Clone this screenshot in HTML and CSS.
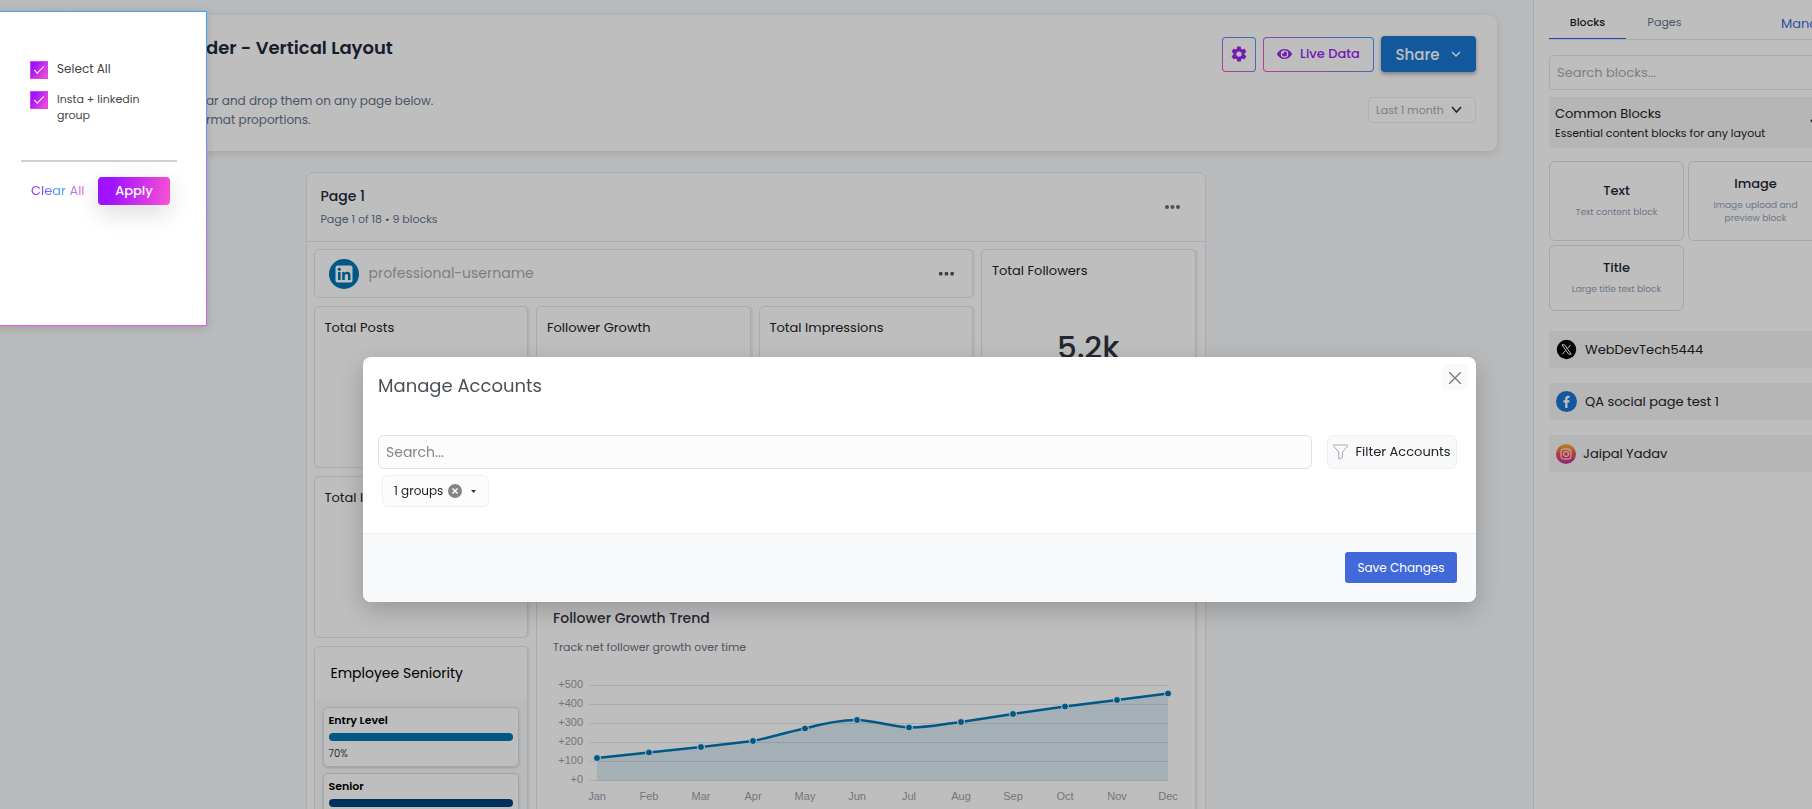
FILE: index.html
```html
<!DOCTYPE html>
<html lang="en">
<head>
<meta charset="utf-8">
<title>Report Builder</title>
<link rel="stylesheet" href="styles.css">
</head>
<body>
<div class="app">
  <main class="main">
    <header class="hero">
      <div class="intro">
        <h1 class="intro-title">der - Vertical Layout</h1>
        <p class="intro-text">ar and drop them on any page below.<br>rmat proportions.</p>
      </div>
      <div class="hero-side">
        <div class="actions">
          <button class="btn-outline btn-gear" aria-label="Settings">
            <svg width="18" height="18" viewBox="0 0 24 24" fill="#9a26f0"><path d="M19.4 13a7.500 7.500 0 0 0 0-2l2.100-1.600a.5.5 0 0 0 .1-.7l-2-3.400a.5.5 0 0 0-.6-.2l-2.500 1a7.300 7.300 0 0 0-1.700-1l-.4-2.600a.5.5 0 0 0-.5-.5h-4a.5.5 0 0 0-.5.500L9.100 5.100a7.300 7.300 0 0 0-1.700 1l-2.500-1a.5.5 0 0 0-.6.200l-2 3.400a.5.5 0 0 0 .1.700L4.500 11a7.500 7.500 0 0 0 0 2l-2.100 1.600a.5.5 0 0 0-.1.700l2 3.400c.1.200.4.300.6.200l2.500-1a7.300 7.300 0 0 0 1.700 1l.4 2.600c0 .3.200.5.500.5h4c.3 0 .5-.2.5-.5l.4-2.600a7.300 7.300 0 0 0 1.700-1l2.500 1c.2.100.5 0 .6-.2l2-3.400a.5.5 0 0 0-.1-.7zM12 15.500a3.500 3.500 0 1 1 0-7 3.500 3.500 0 0 1 0 7z"/></svg>
          </button>
          <button class="btn-outline btn-live">
            <svg width="15" height="12" viewBox="0 0 576 448" fill="#9a26f0"><path d="M572 208C518 103 411 32 288 32S58 103 4 208a35 35 0 0 0 0 32c54 105 161 176 284 176s230-71 284-176a35 35 0 0 0 0-32zM288 368a144 144 0 1 1 0-288 144 144 0 0 1 0 288zm0-240c-9 0-17 1-25 4a48 48 0 0 1-67 67 96 96 0 1 0 92-71z"/></svg>
            Live Data
          </button>
          <button class="btn-share">Share
            <svg width="10" height="7" viewBox="0 0 10 7" fill="none" stroke="#fff" stroke-width="1.500"><path d="M1 1l4 4 4-4"/></svg>
          </button>
        </div>
        <button class="range">Last 1 month
          <svg width="11" height="8" viewBox="0 0 11 8" fill="none" stroke="#333" stroke-width="1.600"><path d="M1 1l4.500 5L10 1"/></svg>
        </button>
      </div>
    </header>

    <section class="page">
      <div class="page-head">
        <div>
          <h2 class="page-title">Page 1</h2>
          <p class="page-meta">Page 1 of 18 • 9 blocks</p>
        </div>
        <button class="dots" aria-label="Page menu"><svg width="15" height="4" viewBox="0 0 15 4" fill="#666a73"><circle cx="2" cy="2" r="2"/><circle cx="7.500" cy="2" r="2"/><circle cx="13" cy="2" r="2"/></svg></button>
      </div>
      <div class="grid">
        <div class="card profile">
          <svg width="30" height="30" viewBox="0 0 30 30"><circle cx="15" cy="15" r="15" fill="#0077b5"/><rect x="6.500" y="6.500" width="17" height="17" rx="2" fill="#fff"/><g fill="#0077b5"><circle cx="10.300" cy="10.300" r="1.600"/><path d="M9 13h2.600v8H9zM13.200 13h2.500v1.200c.5-.8 1.400-1.400 2.600-1.400 2.400 0 3.200 1.500 3.200 3.800V21H19v-4c0-1.200-.3-2-1.400-2-1.200 0-1.800.8-1.800 2v4h-2.600z"/></g></svg>
          <span class="username">professional-username</span>
          <button class="dots" aria-label="Block menu"><svg width="15" height="4" viewBox="0 0 15 4" fill="#555"><rect width="3.500" height="3.500" rx="1"/><rect x="5.700" width="3.500" height="3.500" rx="1"/><rect x="11.400" width="3.500" height="3.500" rx="1"/></svg></button>
        </div>
        <div class="card stat tall"><h3 class="stat-name">Total Followers</h3><p class="stat-value">5.2k</p></div>
        <div class="card stat"><h3 class="stat-name">Total Posts</h3></div>
        <div class="card stat"><h3 class="stat-name">Follower Growth</h3></div>
        <div class="card stat"><h3 class="stat-name">Total Impressions</h3></div>
        <div class="card stat"><h3 class="stat-name">Total Impressions</h3></div>
        <div class="card trend">
          <h3 class="trend-title">Follower Growth Trend</h3>
          <p class="trend-sub">Track net follower growth over time</p>
          <svg class="chart" width="626" height="150" viewBox="0 0 626 150">
            <g stroke="#e3e5e8"><path d="M36.500 15.500H615M36.500 34.500H615M36.500 53.500H615M36.500 72.500H615M36.500 91.500H615M36.500 110.500H615"/></g>
            <path fill="#0077b5" fill-opacity=".13" d="M44 110.500V88L96 82.500 148 77 200 71C220 67 234 62 252 58.500 272 53 288 50 304 50S338 57 356 57.500 390 54 408 52L460 44 512 36.500 564 30 615 23.500V110.500z"/>
            <path fill="none" stroke="#0077b5" stroke-width="2.500" d="M44 88L96 82.500 148 77 200 71C220 67 234 62 252 58.500 272 53 288 50 304 50S338 57 356 57.500 390 54 408 52L460 44 512 36.500 564 30 615 23.500"/>
            <g fill="#0077b5" stroke="#fff"><circle cx="44" cy="88" r="3.500"/><circle cx="96" cy="82.500" r="3.500"/><circle cx="148" cy="77" r="3.500"/><circle cx="200" cy="71" r="3.500"/><circle cx="252" cy="58.500" r="3.500"/><circle cx="304" cy="50" r="3.500"/><circle cx="356" cy="57.500" r="3.500"/><circle cx="408" cy="52" r="3.500"/><circle cx="460" cy="44" r="3.500"/><circle cx="512" cy="36.500" r="3.500"/><circle cx="564" cy="30" r="3.500"/><circle cx="615" cy="23.500" r="3.500"/></g>
            <g class="axis axis-y"><text x="30" y="18">+500</text><text x="30" y="37">+400</text><text x="30" y="56">+300</text><text x="30" y="75">+200</text><text x="30" y="94">+100</text><text x="30" y="113">+0</text></g>
            <g class="axis axis-x"><text x="44" y="130">Jan</text><text x="96" y="130">Feb</text><text x="148" y="130">Mar</text><text x="200" y="130">Apr</text><text x="252" y="130">May</text><text x="304" y="130">Jun</text><text x="356" y="130">Jul</text><text x="408" y="130">Aug</text><text x="460" y="130">Sep</text><text x="512" y="130">Oct</text><text x="564" y="130">Nov</text><text x="615" y="130">Dec</text></g>
          </svg>
        </div>
        <div class="card seniority">
          <h3 class="seniority-title">Employee Seniority</h3>
          <div class="levels">
            <div class="level"><h4 class="level-name">Entry Level</h4><div class="bar"></div><p class="level-value">70%</p></div>
            <div class="level"><h4 class="level-name">Senior</h4><div class="bar bar-dark"></div></div>
          </div>
        </div>
      </div>
    </section>
  </main>

  <aside class="sidebar">
    <div class="side-inner">
      <nav class="tabs">
        <button class="tab tab-on">Blocks</button>
        <button class="tab">Pages</button>
        <a class="manage" href="#">Manage</a>
      </nav>
      <input class="side-search" type="text" placeholder="Search blocks..." aria-label="Search blocks">
      <div class="group-head">
        <div>
          <h2 class="group-title">Common Blocks</h2>
          <p class="group-sub">Essential content blocks for any layout</p>
        </div>
        <svg width="10" height="7" viewBox="0 0 10 7" fill="none" stroke="#222" stroke-width="2"><path d="M1 1l4 4 4-4"/></svg>
      </div>
      <div class="blocks">
        <div class="block"><strong class="block-name">Text</strong><span class="block-text">Text content block</span></div>
        <div class="block"><strong class="block-name">Image</strong><span class="block-text">Image upload and preview block</span></div>
        <div class="block"><strong class="block-name">Title</strong><span class="block-text">Large title text block</span></div>
      </div>
      <div class="accounts">
        <div class="account">
          <svg width="21" height="21" viewBox="0 0 21 21"><circle cx="10.500" cy="10.500" r="9.700" fill="#000"/><path d="M6 5.800h2.600l6.600 9.400h-2.600zM14.700 5.800l-3.800 4.200M9.800 11.200l-3.600 4" fill="none" stroke="#fff"/></svg>
          WebDevTech5444
        </div>
        <div class="account">
          <svg width="21" height="21" viewBox="0 0 21 21"><circle cx="10.500" cy="10.500" r="10.500" fill="#1877d2"/><path d="M9.200 17v-5.500H7.400V9.200h1.800V7.700c0-2 1.100-3 2.900-3h1.500v2.200h-1.100c-.8 0-1 .4-1 1v1.300h2.100l-.3 2.300h-1.800V17z" fill="#fff"/></svg>
          QA social page test 1
        </div>
        <div class="account account-ig">
          <svg width="20" height="20" viewBox="0 0 20 20"><defs><linearGradient id="ig" x2="0" y2="1"><stop offset="0" stop-color="#f9b23c"/><stop offset=".5" stop-color="#f0504a"/><stop offset="1" stop-color="#c22fae"/></linearGradient></defs><circle cx="10" cy="10" r="10" fill="url(#ig)"/><g fill="none" stroke="#fff"><rect x="5" y="5" width="10" height="10" rx="2.500"/><circle cx="10" cy="10" r="2.500"/></g><circle cx="13" cy="7" r=".7" fill="#fff"/></svg>
          Jaipal Yadav
        </div>
      </div>
    </div>
  </aside>
</div>

<div class="backdrop"></div>

<section class="modal" role="dialog" aria-labelledby="modal-title">
  <button class="close" aria-label="Close"><svg width="12" height="12" viewBox="0 0 12 12" stroke="#777" stroke-width="1.300"><path d="M0 0l12 12M12 0L0 12"/></svg></button>
  <h2 class="modal-title" id="modal-title">Manage Accounts</h2>
  <div class="modal-body">
    <div class="search-row">
      <input class="modal-search" type="text" placeholder="Search..." aria-label="Search accounts">
      <button class="filter"><svg width="15" height="16" viewBox="0 0 15 16" fill="none" stroke="#aaa"><path d="M.7 1h13.600v1.500L9.500 8v5.500L5.800 15.200V8L.7 2.500z"/></svg>Filter Accounts</button>
    </div>
    <button class="chip">1 groups
      <svg width="14" height="14" viewBox="0 0 14 14"><circle cx="7" cy="7" r="7" fill="#858585"/><path d="M4.500 4.500l5 5M9.500 4.500l-5 5" stroke="#fff" stroke-width="1.500"/></svg>
      <svg class="caret" width="5" height="3" viewBox="0 0 5 3" fill="#333"><path d="M0 0h5L2.500 3z"/></svg>
    </button>
  </div>
  <footer class="modal-foot"><button class="save">Save Changes</button></footer>
</section>

<section class="popup">
  <div class="popup-inner">
    <label class="check"><input class="box" type="checkbox" checked><span class="check-main">Select All</span></label>
    <label class="check"><input class="box" type="checkbox" checked><span class="check-sub">Insta + linkedin group</span></label>
    <div class="popup-foot">
      <button class="clear">Clear All</button>
      <button class="apply">Apply</button>
    </div>
  </div>
</section>
</body>
</html>
```
FILE: styles.css
```css
* { box-sizing: border-box; margin: 0; }
body { height: 100vh; overflow: hidden; background: #f8fafc; color: #222; font-family: Poppins, Inter, "Noto Sans", sans-serif; font-size: 13px; }
button, input { font-family: inherit; }
button { padding: 0; border: 0; background: none; color: inherit; cursor: pointer; }
h1, h2, h3, h4 { font-weight: 400; }

.app { display: flex; height: 100vh; overflow: hidden; }
.main { flex: 1; min-width: 0; padding: 15px 36px 0 14px; overflow: hidden; }

.hero { display: flex; justify-content: space-between; padding: 21px 21px 22px 192px; border-radius: 8px; background: #fff; box-shadow: 0 2px 10px rgba(0, 0, 0, .12); }
.intro-title { font-size: 18px; line-height: 24px; font-weight: 600; color: #1e293b; }
.intro-text { margin-top: 31px; font-size: 12px; line-height: 19px; color: #64748b; }
.hero-side { display: flex; flex-direction: column; align-items: flex-end; gap: 25px; }
.actions { display: flex; align-items: center; gap: 7px; }
.btn-outline { display: flex; align-items: center; justify-content: center; height: 35px; border: 1px solid transparent; border-radius: 4px; background: linear-gradient(#fff, #fff) padding-box, linear-gradient(45deg, #fa52c9, #9d6cf0 50%, #36a6ff) border-box; color: #9a26f0; }
.btn-gear { width: 34px; }
.btn-live { gap: 8px; width: 111px; font-size: 13px; font-weight: 500; }
.btn-share { display: flex; align-items: center; justify-content: center; gap: 12px; width: 95px; height: 36px; border-radius: 4px; background: #1976d2; box-shadow: 0 2px 4px rgba(0, 0, 0, .35); color: #fff; font-size: 15px; font-weight: 500; }
.range { display: flex; align-items: center; justify-content: space-between; width: 108px; height: 26px; padding: 0 13px 0 7px; border: 1px solid #eee; border-radius: 4px; color: #aaa; font-size: 11px; }

.page { max-width: 900px; margin: 21px auto 0; border: 1px solid #e2e8f0; border-radius: 8px; background: #fff; }
.page-head { display: flex; align-items: center; justify-content: space-between; height: 69px; padding: 0 25px 0 14px; border-bottom: 1px solid #e2e8f0; }
.page-title { font-size: 14px; line-height: 20px; font-weight: 500; color: #1e293b; }
.page-meta { margin-top: 4px; font-size: 11px; line-height: 18px; color: #64748b; }
.dots { display: flex; }
.grid { display: grid; grid-template-columns: repeat(4, 1fr); grid-template-rows: 49px repeat(4, 49px 49px 48px); gap: 8px; padding: 7px 9px 8px 7px; }
.card { border: 1px solid #e5e6e8; border-radius: 5px; background: #fff; box-shadow: 2px 0 0 #f1f2f4; }
.profile { grid-column: 1 / 4; display: flex; align-items: center; padding: 0 18px 0 14px; }
.username { flex: 1; margin-left: 10px; font-size: 14px; color: #aea8b0; }
.stat { grid-row: span 3; padding: 10px; }
.tall { grid-row: span 4; grid-column: 4; }
.stat-name { font-size: 13px; line-height: 22px; }
.stat-value { margin-top: 43px; text-align: center; font-size: 31px; line-height: 44px; font-weight: 500; color: #2f3542; }
.trend { grid-column: 2 / 5; grid-row: 7 / span 5; padding: 15px 16px; }
.trend-title { font-size: 14px; line-height: 24px; font-weight: 500; color: #333645; }
.trend-sub { margin-top: 8px; font-size: 11px; line-height: 18px; color: #6b7280; }
.chart { display: block; margin-top: 14px; }
.axis { font-family: "Liberation Sans", Arial, sans-serif; font-size: 11px; fill: #9a9ea8; }
.axis-y { text-anchor: end; }
.axis-x { text-anchor: middle; }
.seniority { grid-column: 1; grid-row: 8 / span 5; overflow: hidden; }
.seniority-title { padding: 14px 16px; font-size: 14px; line-height: 25px; color: #000; }
.levels { display: flex; flex-direction: column; gap: 6px; height: 100%; padding: 7px 8px; background: #f8fafc; }
.level { padding: 4px 5px; border: 1px solid #dcdee2; border-radius: 5px; background: #fff; box-shadow: 0 1px 3px rgba(0, 0, 0, .15); }
.level-name { font-size: 11px; line-height: 17px; font-weight: 600; color: #000; }
.bar { height: 8px; margin: 4px 0; border-radius: 4px; background: #0077b5; }
.bar-dark { background: #004182; }
.level-value { font-size: 10px; line-height: 17px; color: #444; }

.sidebar { flex: none; width: 279px; overflow: hidden; border-left: 1px solid #e2e4f0; background: #fff; }
.side-inner { width: 316px; padding: 0 15px; }
.tabs { display: flex; align-items: flex-start; height: 40px; border-bottom: 1px solid #e2e8f0; }
.tab { width: 77px; height: 39px; padding-top: 6px; font-size: 11px; color: #64748b; }
.tab-on { border-bottom: 1px solid #2563eb; color: #222; font-weight: 500; }
.manage { margin-left: auto; color: #3f68d8; font-size: 13px; line-height: 47px; text-decoration: none; }
.side-search { display: block; width: 100%; height: 35px; margin-top: 15px; padding: 0 7px; border: 1px solid #e2e8f0; border-radius: 4px; font-size: 13px; }
.side-search::placeholder { color: #aaa; }
.group-head { display: flex; align-items: center; justify-content: space-between; height: 51px; margin-top: 7px; padding: 0 15px 0 6px; background: #f4f4f4; }
.group-title { font-size: 13px; line-height: 20px; }
.group-sub { font-size: 11px; line-height: 18px; }
.blocks { display: grid; grid-template-columns: 135px 135px; grid-template-rows: 80px 66px; gap: 4px; margin-top: 13px; }
.block { display: flex; flex-direction: column; align-items: center; justify-content: center; gap: 5px; padding: 0 16px 3px; border: 1px solid #e0e1e4; border-radius: 6px; text-align: center; }
.block-name { font-size: 13px; line-height: 20px; font-weight: 500; color: #1e293b; }
.block-text { font-size: 9px; line-height: 13px; color: #94a3b8; }
.accounts { display: flex; flex-direction: column; gap: 15px; margin-top: 20px; }
.account { display: flex; align-items: center; gap: 8px; height: 37px; padding: 0 7px; background: #f4f4f4; font-size: 13px; }
.account-ig { gap: 7px; }

.backdrop { position: fixed; inset: 0; background: rgba(0, 0, 0, .255); }

.modal { position: absolute; top: 357px; left: 363px; right: 336px; overflow: hidden; border-radius: 8px; background: #fff; box-shadow: 0 8px 24px rgba(0, 0, 0, .2); }
.modal-title { padding: 15px 15px 0; font-size: 18px; line-height: 28px; color: #495057; }
.close { position: absolute; top: 7px; right: 8px; display: flex; align-items: center; justify-content: center; width: 27px; height: 27px; border-radius: 6px; background: #fafafa; }
.modal-body { padding: 35px 19px 26px 15px; }
.search-row { display: flex; gap: 15px; }
.modal-search { flex: 1; height: 34px; padding: 0 7px; border: 1px solid #dee2e6; border-radius: 6px; background: #fcfcfc; font-size: 14px; }
.modal-search::placeholder { color: #80868c; }
.filter { display: flex; align-items: center; justify-content: center; gap: 7px; width: 130px; height: 34px; border: 1px solid #eee; border-radius: 6px; background: #f8f9fb; font-size: 13px; }
.chip { display: flex; align-items: center; gap: 5px; width: 107px; height: 32px; margin: 6px 4px 0; padding: 0 11px; border: 1px solid #f0f0f0; border-radius: 6px; background: #fcfcfc; font-size: 12px; }
.caret { margin-left: 4px; }
.modal-foot { display: flex; justify-content: flex-end; padding: 18px 19px; border-top: 1px solid #edf0f3; background: #f8f9fb; }
.save { width: 112px; height: 31px; margin-bottom: 1px; border-radius: 3px; background: #4169d9; color: #fff; font-size: 12px; }

.popup { position: absolute; top: 11px; left: -40px; width: 247px; height: 315px; padding: 1px; background: linear-gradient(200deg, #36a6ff, #9d7cf0 50%, #fa52c9); box-shadow: 0 2px 8px rgba(0, 0, 0, .15); }
.popup-inner { display: flex; flex-direction: column; gap: 12px; height: 100%; padding: 49px 29px 0 60px; background: #fff; }
.check { display: flex; gap: 9px; margin-left: 9px; }
.box { appearance: none; flex: none; width: 18px; height: 18px; margin: 0; border: 1px solid #d048e0; background: linear-gradient(120deg, #a012ff 20%, #fa52d2); }
.box::after { content: ""; display: block; width: 9px; height: 4px; margin: 4px 3px; border: solid #fff; border-width: 0 0 1px 1px; transform: rotate(-45deg); }
.check-main { font-size: 12px; line-height: 16px; color: #444; }
.check-sub { width: 100px; font-size: 11px; line-height: 16px; color: #444; }
.popup-foot { display: flex; align-items: center; justify-content: space-between; margin-top: 25px; padding: 15px 7px 0 10px; border-top: 2px solid #d0d0d0; }
.clear { background: linear-gradient(90deg, #9a26f0, #42a5ff 55%, #fa62d2); background-clip: text; color: transparent; font-size: 13px; }
.apply { width: 72px; height: 28px; border-radius: 4px; background: linear-gradient(100deg, #a012ff 20%, #fa52d2); box-shadow: 0 8px 24px rgba(0, 0, 0, .14); color: #fff; font-size: 13px; font-weight: 500; }
```
